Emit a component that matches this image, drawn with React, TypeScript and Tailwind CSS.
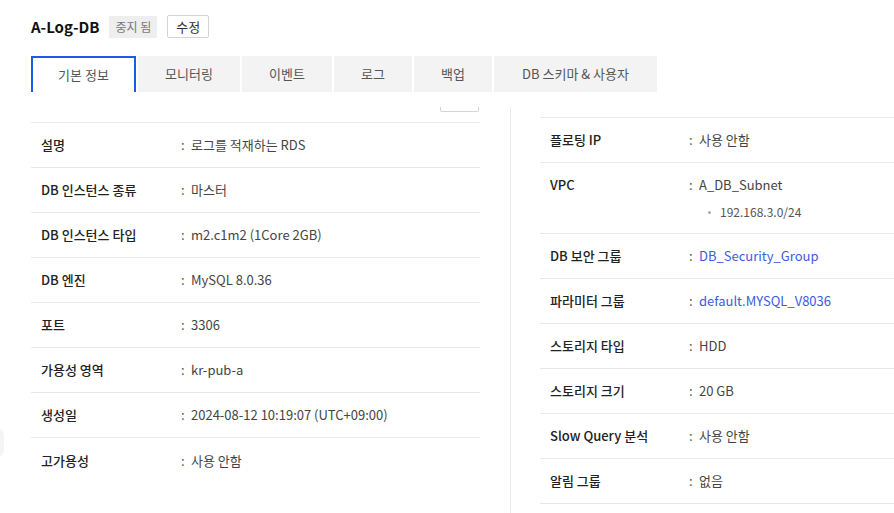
import React from "react";

type Row = { label: string; value: string; link?: boolean; sub?: string };

const leftRows: Row[] = [
  { label: "설명", value: "로그를 적재하는 RDS" },
  { label: "DB 인스턴스 종류", value: "마스터" },
  { label: "DB 인스턴스 타입", value: "m2.c1m2 (1Core 2GB)" },
  { label: "DB 엔진", value: "MySQL 8.0.36" },
  { label: "포트", value: "3306" },
  { label: "가용성 영역", value: "kr-pub-a" },
  { label: "생성일", value: "2024-08-12 10:19:07 (UTC+09:00)" },
  { label: "고가용성", value: "사용 안함" },
];

const rightRows: Row[] = [
  { label: "플로팅 IP", value: "사용 안함" },
  { label: "VPC", value: "A_DB_Subnet", sub: "192.168.3.0/24" },
  { label: "DB 보안 그룹", value: "DB_Security_Group", link: true },
  { label: "파라미터 그룹", value: "default.MYSQL_V8036", link: true },
  { label: "스토리지 타입", value: "HDD" },
  { label: "스토리지 크기", value: "20 GB" },
  { label: "Slow Query 분석", value: "사용 안함" },
  { label: "알림 그룹", value: "없음" },
];

const tabs = [
  { name: "기본 정보", w: "w-[105px]" },
  { name: "모니터링", w: "w-[102px]" },
  { name: "이벤트", w: "w-[90px]" },
  { name: "로그", w: "w-[78px]" },
  { name: "백업", w: "w-[78px]" },
  { name: "DB 스키마 & 사용자", w: "w-[163px]" },
];

function InfoRow({ row, labelW, last }: { row: Row; labelW: string; last?: boolean }) {
  return (
    <div
      className={
        "flex px-[10px] " +
        (row.sub ? "pt-[12px] pb-[13px] " : "h-[45px] items-center ") +
        (last ? "" : "border-b border-[#e8e8e8]")
      }
    >
      <div className={labelW + " shrink-0 text-[13px] font-medium text-[#222] leading-[20px]"}>
        {row.label}
      </div>
      <div className="flex-1">
        <div className="flex text-[13px] leading-[20px]">
          <span className="w-[11px] pl-[1px] text-[#555]">:</span>
          <span className={row.link ? "text-[#3d5be0]" : "text-[#444]"}>{row.value}</span>
        </div>
        {row.sub && (
          <div className="flex items-center pl-[20px] mt-[9px] text-[12px] leading-[16px] text-[#555]">
            <span className="w-[3px] h-[3px] rounded-full bg-[#aaa] mr-[9px]" />
            {row.sub}
          </div>
        )}
      </div>
    </div>
  );
}

export default function App() {
  return (
    <div
      className="relative w-full h-[513px] overflow-hidden bg-white"
      style={{ fontFamily: '"Noto Sans CJK KR", "Noto Sans", sans-serif' }}
    >
      <div className="flex items-center pl-[31px] pt-[15px] h-[38px]">
        <h1 className="text-[15px] font-bold text-[#111] leading-[22px]">A-Log-DB</h1>
        <span className="ml-[10px] h-[22px] px-[6px] flex items-center bg-[#eeeeee] text-[12px] text-[#777]">
          중지 됨
        </span>
        <button className="ml-[10px] h-[23px] px-[8px] flex items-center border border-[#d4d4d4] rounded-[2px] text-[13px] text-[#333] bg-white">
          수정
        </button>
      </div>

      <div className="flex gap-[2px] pl-[31px] mt-[18px]">
        {tabs.map((t, i) => (
          <div
            key={t.name}
            className={
              t.w +
              " h-[36px] flex items-center justify-center text-[13px] text-[#555] " +
              (i === 0
                ? "bg-white border-2 border-b-0 border-[#1a5ce6]"
                : "bg-[#f3f3f3]")
            }
          >
            {t.name}
          </div>
        ))}
      </div>

      <div className="flex pl-[31px] mt-[15px]">
        <div className="w-[449px] shrink-0">
          <div className="flex justify-end pr-[1px]">
            <div className="w-[39px] h-[5px] border border-t-0 border-[#d4d4d4] rounded-b-[2px]" />
          </div>
          <div className="mt-[10px] border-t border-[#e8e8e8]">
            {leftRows.map((r, i) => (
              <InfoRow key={r.label} row={r} labelW="w-[139px]" last={i === leftRows.length - 1} />
            ))}
          </div>
        </div>
        <div className="ml-[30px] w-px bg-[#e8e8e8] h-[420px]" />
        <div className="ml-[29px] flex-1">
          <div className="mt-[10px] border-t border-[#e8e8e8]">
            {rightRows.map((r) => (
              <InfoRow key={r.label} row={r} labelW="w-[138px]" />
            ))}
          </div>
        </div>
      </div>

      <div className="absolute left-[-12px] top-[428px] w-[16px] h-[30px] rounded-full bg-[#f4f4f4]" />
    </div>
  );
}
